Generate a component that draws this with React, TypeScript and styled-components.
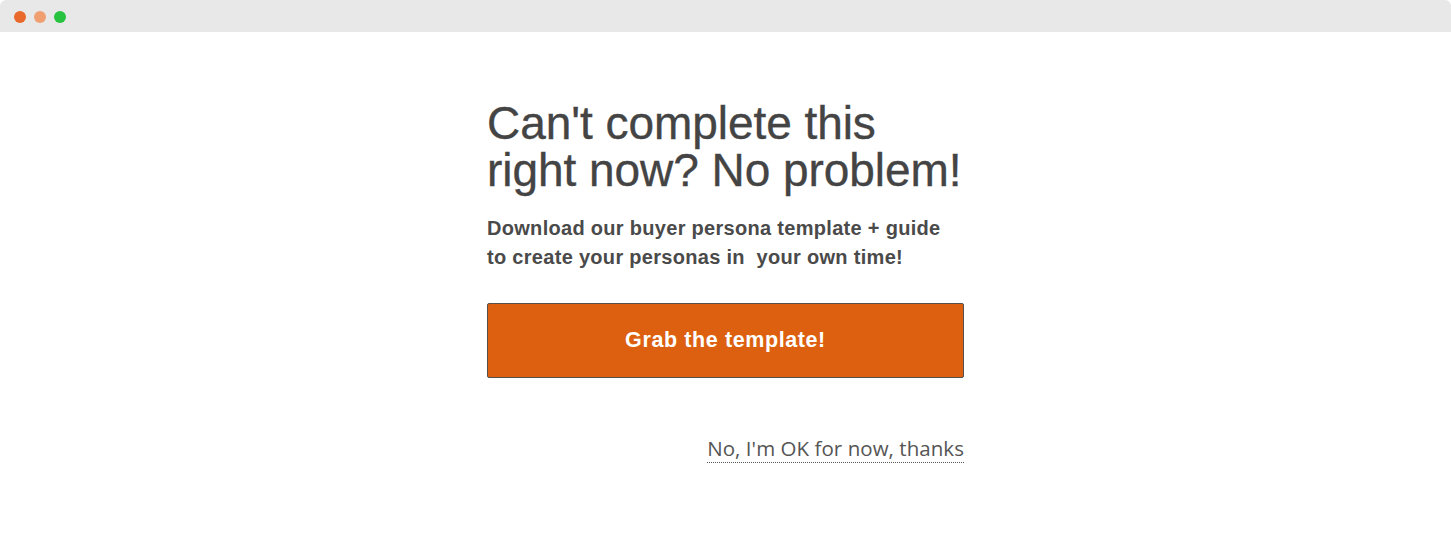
import React from "react";
import styled, { createGlobalStyle } from "styled-components";

const GlobalStyle = createGlobalStyle`
  html, body {
    margin: 0;
    padding: 0;
    background: #ffffff;
  }
`;

const Window = styled.div`
  width: 1451px;
  height: 549px;
  display: flex;
  flex-direction: column;
  background: #ffffff;
  border-radius: 6px 6px 0 0;
  overflow: hidden;
`;

const TitleBar = styled.div`
  height: 32px;
  flex-shrink: 0;
  display: flex;
  align-items: center;
  gap: 8px;
  padding: 1px 0 0 14px;
  box-sizing: border-box;
  background: #e8e8e8;
`;

const Dot = styled.span<{ $color: string }>`
  width: 12px;
  height: 12px;
  border-radius: 50%;
  background: ${(p) => p.$color};
`;

const Body = styled.div`
  flex: 1;
  display: flex;
  justify-content: center;
  padding-top: 68px;
`;

const Panel = styled.div`
  width: 477px;
  display: flex;
  flex-direction: column;
  font-family: "Liberation Sans", Arial, sans-serif;
  color: #454545;
`;

const Heading = styled.h1`
  margin: 0;
  font-size: 46px;
  font-weight: 400;
  line-height: 47px;
  letter-spacing: -0.05px;
  color: #444444;
  -webkit-text-stroke: 0.35px #444444;
`;

const Lead = styled.p`
  margin: 20px 0 0;
  font-size: 20px;
  font-weight: 700;
  line-height: 29px;
  letter-spacing: 0.3px;
  color: #4a4a4a;
`;

const GrabButton = styled.button`
  margin-top: 31px;
  height: 75px;
  width: 100%;
  background: #dd6010;
  border: 1px solid #55504c;
  border-radius: 2px;
  color: #ffffff;
  font-family: "Liberation Sans", Arial, sans-serif;
  font-size: 21.5px;
  font-weight: 700;
  letter-spacing: 0.6px;
  cursor: pointer;
`;

const Skip = styled.a`
  align-self: flex-end;
  margin-top: 57px;
  padding-bottom: 1px;
  font-family: "Open Sans", sans-serif;
  font-size: 20.5px;
  line-height: 26px;
  letter-spacing: 0.05px;
  color: #555555;
  text-decoration: none;
  border-bottom: 1px dotted #555555;
  cursor: pointer;
`;

export default function App(): JSX.Element {
  return (
    <>
      <GlobalStyle />
      <Window>
        <TitleBar>
          <Dot $color="#e9682b" />
          <Dot $color="#f0a070" />
          <Dot $color="#27c23f" />
        </TitleBar>
        <Body>
          <Panel>
            <Heading>
              Can't complete this
              <br />
              right now? No problem!
            </Heading>
            <Lead>
              Download our buyer persona template + guide
              <br />
              to create your personas in&nbsp; your own time!
            </Lead>
            <GrabButton>Grab the template!</GrabButton>
            <Skip>No, I'm OK for now, thanks</Skip>
          </Panel>
        </Body>
      </Window>
    </>
  );
}
